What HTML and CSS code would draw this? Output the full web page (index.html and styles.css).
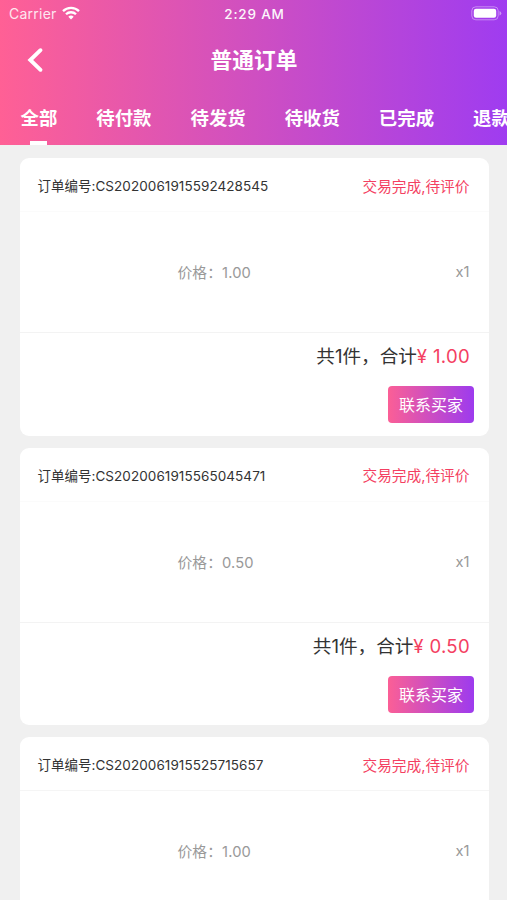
FILE: index.html
```html
<!DOCTYPE html>
<html lang="zh-CN">
<head>
<meta charset="utf-8">
<title>普通订单</title>
<link rel="stylesheet" href="styles.css">
</head>
<body>
<header class="header">
  <div class="status-bar">
    <div class="carrier"><span class="carrier-name">Carrier</span>
      <svg class="wifi" viewBox="0 0 18 14" width="18" height="14"><g fill="none" stroke="#fff" stroke-width="2.3"><path d="M1 5.1a11.4 11.4 0 0 1 16 0"/><path d="M4 8.3a7.1 7.1 0 0 1 10 0"/></g><path d="M6.3 10.8a3.9 3.9 0 0 1 5.4 0L9 13.6z" fill="#fff"/></svg>
    </div>
    <time class="clock">2:29 AM</time>
    <svg class="battery" viewBox="0 0 31 15" width="31" height="15"><rect x=".8" y=".8" width="26.4" height="13" rx="4" fill="none" stroke="#fff" stroke-opacity=".4"/><rect x="2.8" y="2.8" width="22.4" height="9" rx="2.2" fill="#fff"/><path d="M28.5 5v4.6q1.8-.7 1.8-2.3T28.5 5" fill="#fff" fill-opacity=".45"/></svg>
  </div>
  <div class="nav-bar">
    <svg class="back" viewBox="0 0 18 26" width="18" height="26"><path d="M14.5 3.2 4.3 13l10.200 9.800" fill="none" stroke="#fff" stroke-width="3.900" stroke-linecap="round"/></svg>
    <h1 class="title">普通订单</h1>
  </div>
  <nav class="tabs">
    <a class="tab active">全部</a><a class="tab">待付款</a><a class="tab">待发货</a><a class="tab">待收货</a><a class="tab">已完成</a><a class="tab">退款</a>
  </nav>
</header>
<main class="orders">
  <article class="card">
    <div class="card-head"><span class="number">订单编号:<span class="code">CS2020061915592428545</span></span><span class="state">交易完成,待评价</span></div>
    <div class="item"><span class="price">价格：1.00</span><span>x1</span></div>
    <div class="card-foot"><p class="total">共1件，合计<span class="amount">¥ 1.00</span></p><button class="contact">联系买家</button></div>
  </article>
  <article class="card">
    <div class="card-head"><span class="number">订单编号:<span class="code">CS2020061915565045471</span></span><span class="state">交易完成,待评价</span></div>
    <div class="item"><span class="price">价格：0.50</span><span>x1</span></div>
    <div class="card-foot"><p class="total">共1件，合计<span class="amount">¥ 0.50</span></p><button class="contact">联系买家</button></div>
  </article>
  <article class="card">
    <div class="card-head"><span class="number">订单编号:<span class="code">CS2020061915525715657</span></span><span class="state">交易完成,待评价</span></div>
    <div class="item"><span class="price">价格：1.00</span><span>x1</span></div>
  </article>
</main>
</body>
</html>
```

FILE: styles.css
```css
* { box-sizing: border-box; }
body {
  margin: 0;
  height: 900px;
  overflow: hidden;
  background: #f0f0f0;
  color: #333;
  font-family: Inter, "Noto Sans CJK SC", sans-serif;
}
.header {
  height: 145px;
  overflow: hidden;
  color: #fff;
  background: linear-gradient(90deg, #ff6095 0%, #cf4fc1 50%, #9f3cf0 100%);
}
.status-bar {
  display: grid;
  grid-template-columns: 1fr auto 1fr;
  align-items: center;
  height: 27px;
  padding: 0 5px 0 9px;
}
.carrier { display: flex; align-items: center; gap: 5px; }
.carrier-name { font-size: 14px; letter-spacing: .25px; opacity: .85; }
.wifi { margin-top: -2px; }
.clock { margin-left: -2px; font-size: 13.5px; font-weight: 500; letter-spacing: .8px; opacity: .95; }
.battery { justify-self: end; }
.nav-bar {
  display: grid;
  grid-template-columns: 60px 1fr 60px;
  align-items: center;
  height: 66px;
}
.back { margin-left: 26px; }
.title { margin: 0; padding-left: 1px; text-align: center; font-size: 21.7px; line-height: 30px; font-weight: 600; }
.tabs { display: flex; height: 52px; padding-left: 1px; }
.tab {
  flex: none;
  position: relative;
  padding: 0 19.5px;
  font-size: 18.4px;
  line-height: 50px;
  font-weight: 600;
  white-space: nowrap;
}
.tab.active::after {
  content: "";
  position: absolute;
  left: calc(50% - 9px);
  bottom: 0;
  width: 17px;
  height: 4px;
  background: #fff;
}
.orders { display: flex; flex-direction: column; gap: 12.3px; padding: 13.3px 18.5px 0 19.5px; }
.card { flex: none; height: 277.3px; border-radius: 9px; background: #fff; }
.card-head {
  display: flex;
  justify-content: space-between;
  align-items: center;
  height: 54px;
  padding: 1px 19px 0 18px;
  border-bottom: 1px solid #fbfbfb;
}
.card:last-child .card-head { border-bottom-color: #f5f5f5; }
.number { font-size: 13.5px; }
.code { letter-spacing: .07px; }
.state { color: #f43f62; font-size: 14.7px; }
.item {
  display: flex;
  justify-content: space-between;
  align-items: center;
  height: 121px;
  padding: 0 19px 0 158px;
  border-bottom: 1px solid #f3f3f3;
  color: #999;
  font-size: 14.7px;
}
.price { margin-top: -1px; letter-spacing: .15px; }
.card-foot { display: flex; flex-direction: column; align-items: flex-end; padding: 9px 15px 0; }
.total { margin: 0 3.5px 0 0; font-size: 18.6px; line-height: 28px; }
.amount { color: #f43f62; letter-spacing: .3px; }
.contact {
  width: 86px;
  height: 37px;
  margin-top: 16px;
  padding: 0 0 0 1px;
  border: 0;
  border-radius: 4px;
  color: #fff;
  font: 400 16px/38px Inter, "Noto Sans CJK SC", sans-serif;
  background: linear-gradient(90deg, #fb5f96, #9d3bee);
}
```
